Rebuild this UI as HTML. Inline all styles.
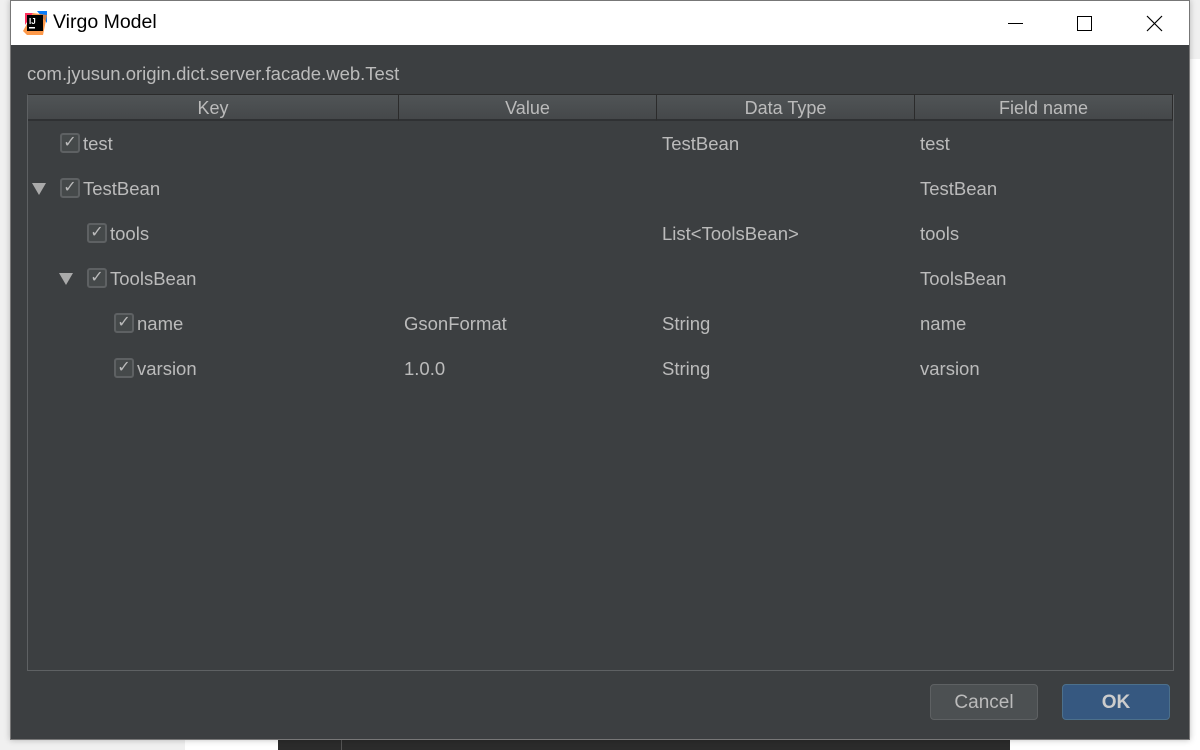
<!DOCTYPE html>
<html><head><meta charset="utf-8"><style>
*{box-sizing:border-box;margin:0;padding:0}
body{width:1200px;height:750px;position:relative;overflow:hidden;background:#f0f0f0;font-family:"Liberation Sans",sans-serif}
.bg1{position:absolute;left:185px;top:0;width:1015px;height:750px;background:#fff}
.bg2{position:absolute;left:278px;top:700px;width:732px;height:50px;background:#2b2b2b}
.bg3{position:absolute;left:341px;top:700px;width:1px;height:50px;background:#555}
.bg4{position:absolute;left:1189px;top:0;width:11px;height:59px;background:#f0f0f0}
.dlg{position:absolute;left:10px;top:0;width:1180px;height:740px;background:#3c3f41;border:1px solid #777;box-shadow:0 0 6px rgba(0,0,0,.25)}
.title{position:absolute;left:0;top:0;width:1178px;height:44px;background:#fff;color:#000;font-size:19.5px}
.title .t{position:absolute;left:42px;top:10px}
.pkg{position:absolute;left:16px;top:62px;color:#bbb;font-size:18.5px}
.tbl{position:absolute;left:16px;top:93px;width:1147px;height:577px;border:1px solid #5e6163;border-top:1px solid #2b2b2b}
.hdr{position:absolute;left:0;top:0;height:26px;background:linear-gradient(#505456,#45484a);border-right:1px solid #2b2b2b;border-bottom:2px solid #2f3133;color:#bbb;font-size:18px;text-align:center;line-height:26px}
.c{position:absolute;color:#bbb;font-size:18.5px;line-height:20px;margin-top:1px}
.cb{position:absolute;width:20px;height:20px;border:2px solid #5e6163;border-radius:3px;background:#45494a;color:#bbb;font-size:16px;line-height:16px;text-align:center}
.tri{position:absolute;width:0;height:0;border-left:7px solid transparent;border-right:7px solid transparent;border-top:12px solid #aaa}
.btn{position:absolute;top:684px;height:36px;border-radius:4px;font-size:19px;text-align:center;line-height:36px}
</style></head><body>
<div class="bg1"></div><div class="bg2"></div><div class="bg3"></div><div class="bg4"></div>
<div class="dlg">
 <div class="title">
  <svg style="position:absolute;left:12px;top:10px" width="24" height="24" viewBox="0 0 24 24"><path d="M2 2h8l-8 12z" fill="#fe315d"/><path d="M14 0h10v12z" fill="#087cfa"/><path d="M0 20l10-18 14 2-4 20H4z" fill="#fc801d" opacity=".8"/><rect x="4" y="4" width="16" height="16" fill="#000"/><text x="6" y="13" fill="#fff" font-size="8" font-family="Liberation Sans" font-weight="bold">IJ</text><rect x="6" y="16" width="6" height="1.5" fill="#fff"/></svg>
  <span class="t">Virgo Model</span>
  <div style="position:absolute;left:997px;top:22px;width:15px;height:1px;background:#000"></div>
  <div style="position:absolute;left:1066px;top:15px;width:15px;height:15px;border:1px solid #000"></div>
  <svg style="position:absolute;left:1135px;top:14px" width="17" height="17"><path d="M1 1L16 16M16 1L1 16" stroke="#000" stroke-width="1.2"/></svg>
 </div>
 <div class="pkg">com.jyusun.origin.dict.server.facade.web.Test</div>
 <div class="tbl">
  <div class="hdr" style="left:0;width:371px">Key</div>
  <div class="hdr" style="left:371px;width:258px">Value</div>
  <div class="hdr" style="left:629px;width:258px">Data Type</div>
  <div class="hdr" style="left:887px;width:258px">Field name</div>
  <div style="position:absolute;left:1145px;top:0;width:1px;height:575px;background:#5e6163"></div>
 </div>
</div>
<div class="cb" style="left:60px;top:133px">✓</div><div class="c" style="left:83px;top:133px">test</div>
<div class="c" style="left:662px;top:133px">TestBean</div><div class="c" style="left:920px;top:133px">test</div>

<div class="tri" style="left:32px;top:183px"></div>
<div class="cb" style="left:60px;top:178px">✓</div><div class="c" style="left:83px;top:178px">TestBean</div>
<div class="c" style="left:920px;top:178px">TestBean</div>

<div class="cb" style="left:87px;top:223px">✓</div><div class="c" style="left:110px;top:223px">tools</div>
<div class="c" style="left:662px;top:223px">List&lt;ToolsBean&gt;</div><div class="c" style="left:920px;top:223px">tools</div>

<div class="tri" style="left:59px;top:273px"></div>
<div class="cb" style="left:87px;top:268px">✓</div><div class="c" style="left:110px;top:268px">ToolsBean</div>
<div class="c" style="left:920px;top:268px">ToolsBean</div>

<div class="cb" style="left:114px;top:313px">✓</div><div class="c" style="left:137px;top:313px">name</div>
<div class="c" style="left:404px;top:313px">GsonFormat</div><div class="c" style="left:662px;top:313px">String</div><div class="c" style="left:920px;top:313px">name</div>

<div class="cb" style="left:114px;top:358px">✓</div><div class="c" style="left:137px;top:358px">varsion</div>
<div class="c" style="left:404px;top:358px">1.0.0</div><div class="c" style="left:662px;top:358px">String</div><div class="c" style="left:920px;top:358px">varsion</div>

<div class="btn" style="left:930px;width:108px;background:#4c5052;border:1px solid #5e6163;color:#bbb">Cancel</div>
<div class="btn" style="left:1062px;width:108px;background:#365880;border:1px solid #4c708c;color:#ccc;font-weight:bold">OK</div>
</body></html>
